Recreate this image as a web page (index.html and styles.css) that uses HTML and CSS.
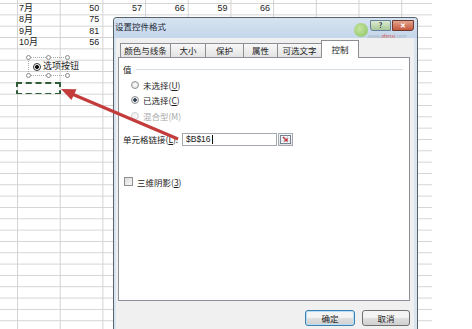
FILE: index.html
```html
<!DOCTYPE html>
<html lang="zh-CN">

<head>
  <meta charset="UTF-8">
  <title>设置控件格式</title>
  <link rel="stylesheet" href="styles.css">
</head>

<body>
  <!-- worksheet -->
  <div class="sheet">
    <div class="row"><span></span><span class="txt">7月</span><span class="num">50</span><span class="num">57</span><span class="num">66</span><span class="num">59</span><span class="num">66</span></div>
    <div class="row"><span></span><span class="txt">8月</span><span class="num">75</span></div>
    <div class="row"><span></span><span class="txt">9月</span><span class="num">81</span></div>
    <div class="row"><span></span><span class="txt">10月</span><span class="num">56</span></div>
    <div class="row"></div>
    <div class="row"></div>
    <div class="row"></div>
    <div class="row"><span></span><span class="marquee"></span></div>
  </div>

  <!-- option button control on the sheet -->
  <div class="optctl">
    <span class="h tl"></span><span class="h tm"></span><span class="h tr"></span>
    <span class="h bl"></span><span class="h bm"></span><span class="h br"></span>
    <span class="ctl-radio"></span><span class="ctl-label">选项按钮</span>
  </div>

  <!-- dialog -->
  <div class="dialog">
    <div class="titlebar">
      <span class="title">设置控件格式</span>
      <div class="capbtns">
        <span class="cap help">?</span>
        <span class="cap close">✕</span>
      </div>
    </div>
    <div class="client">
      <div class="tabs">
        <span class="tab w50">颜色与线条</span>
        <span class="tab w35">大小</span>
        <span class="tab w38">保护</span>
        <span class="tab w34">属性</span>
        <span class="tab w45">可选文字</span>
        <span class="tab active">控制</span>
      </div>
      <div class="panel">
        <div class="group-head">值</div>
        <div class="options">
          <div class="opt"><span class="radio"></span><span>未选择(<u>U</u>)</span></div>
          <div class="opt"><span class="radio on"></span><span>已选择(<u>C</u>)</span></div>
          <div class="opt off"><span class="radio"></span><span>混合型(M)</span></div>
        </div>
        <div class="link">
          <span class="link-label">单元格链接(<u>L</u>):</span>
          <span class="field">$B$16<i class="caret"></i></span>
          <span class="refbtn">
            <svg width="11" height="9" viewBox="0 0 11 9">
              <rect x="0.5" y="0.5" width="10" height="8" fill="#fff" stroke="#6f7f90" />
              <path d="M0.5 3h10M0.5 6h10M4 0.5v8M7.5 0.5v8" stroke="#b8c4d0" stroke-width="0.7" />
              <path d="M3 2l4 4M7 3.2v2.8h-2.8" stroke="#c8303a" stroke-width="1.2" fill="none" />
            </svg>
          </span>
        </div>
        <div class="check"><span class="box"></span><span>三维阴影(<u>3</u>)</span></div>
      </div>
      <div class="actions">
        <button class="btn default">确定</button>
        <button class="btn">取消</button>
      </div>
    </div>
  </div>

  <!-- site watermark -->
  <div class="mark">
    <span class="mark-logo"></span>
    <span class="mark-url">www.<b>afenxi</b>.com</span>
  </div>

  <!-- red pointer arrow -->
  <svg class="arrow" width="472" height="329" viewBox="0 0 472 329">
    <line x1="72" y1="94" x2="178" y2="139" stroke="#c33b3b" stroke-width="3" />
    <polygon points="61,89 76.5,89.2 71.5,100" fill="#c33b3b" />
  </svg>
</body>

</html>
```

FILE: styles.css
```css
body {
  margin: 0;
  width: 472px;
  height: 329px;
  overflow: hidden;
  position: relative;
  background: #fff;
  font-family: "Noto Sans CJK SC", "Liberation Sans", sans-serif;
  color: #1b1b1b;
}

/* worksheet */
.sheet {
  width: 432px;
  height: 329px;
  padding-top: 3px;
  box-sizing: border-box;
  background-image:
    linear-gradient(to right, #d3d3d3 1px, transparent 1px),
    linear-gradient(to bottom, #d3d3d3 1px, transparent 1px);
  background-size: 42.7px 100%, 100% 11.33px;
  background-position: 17px 0, 0 3.07px;
}

.row {
  display: grid;
  grid-template-columns: 17px repeat(6, 42.7px);
  height: 11.33px;
  font-family: "Liberation Sans", "Noto Sans CJK SC", sans-serif;
  font-size: 9px;
  line-height: 11.33px;
  color: #222;
  overflow: hidden;
}

.txt {
  padding-left: 2px;
}

.num {
  text-align: right;
  padding-right: 3px;
}

.marquee {
  outline: 2px dashed #2f5e38;
  outline-offset: -1px;
  margin-top: 1px;
}

.optctl {
  position: absolute;
  left: 28px;
  top: 57px;
  width: 40px;
  height: 19px;
  border: 1px dotted #a8a8a8;
  box-sizing: border-box;
}

.h {
  position: absolute;
  width: 3px;
  height: 3px;
  border: 1px solid #8a8a8a;
  border-radius: 50%;
  background: #fff;
}

.tl { left: -3px; top: -3px; }
.tm { left: 17px; top: -3px; }
.tr { right: -3px; top: -3px; }
.bl { left: -3px; bottom: -3px; }
.bm { left: 17px; bottom: -3px; }
.br { right: -3px; bottom: -3px; }

.ctl-radio {
  position: absolute;
  left: 4px;
  top: 5px;
  width: 6px;
  height: 6px;
  border: 1px solid #333;
  border-radius: 50%;
  background: radial-gradient(#111 0 1.8px, #fff 2.2px);
}

.ctl-label {
  position: absolute;
  left: 14px;
  top: 2px;
  font-size: 9px;
  line-height: 12px;
  white-space: nowrap;
}

/* dialog */
.dialog {
  position: absolute;
  left: 113px;
  top: 17px;
  width: 305px;
  height: 312px;
  box-sizing: border-box;
  border: 1px solid #58626d;
  border-bottom: none;
  border-radius: 4px 4px 0 0;
  background: #d9e4ef;
  display: flex;
  flex-direction: column;
  font-size: 8.5px;
}

.titlebar {
  height: 20px;
  display: flex;
  align-items: flex-start;
  padding-left: 1px;
  background: linear-gradient(#d6e3f1, #c4d6ea);
  border-radius: 3px 3px 0 0;
}

.title {
  line-height: 16px;
  color: #1e2b3a;
}

.capbtns {
  margin-left: auto;
  margin-right: 3px;
  margin-top: 2px;
  display: flex;
  gap: 1px;
}

.cap {
  height: 9px;
  line-height: 9px;
  text-align: center;
  font-size: 7px;
  font-weight: bold;
  border: 1px solid #66809a;
}

.help {
  width: 19px;
  border-radius: 0 0 0 3px;
  background: linear-gradient(#dcead0, #a9c99a);
  color: #234;
}

.close {
  width: 20px;
  border-color: #6e3b32;
  border-radius: 0 0 3px 0;
  background: linear-gradient(#e4a48d, #c4573b);
  color: #fff;
}

.client {
  flex: 1;
  margin: 0 3px 0 2px;
  padding-top: 2px;
  background: #f0f0f0;
  display: flex;
  flex-direction: column;
}

.tabs {
  height: 17px;
  margin-left: 4px;
  display: flex;
  align-items: flex-end;
}

.tab {
  height: 14px;
  box-sizing: border-box;
  border: 1px solid #8c8e94;
  border-bottom: none;
  border-right: none;
  background: linear-gradient(#f8f8f8, #e3e3e3);
  text-align: center;
  line-height: 13px;
}

.w50 { width: 50px; }
.w35 { width: 35px; }
.w38 { width: 38px; }
.w34 { width: 34px; }
.w45 { width: 45px; border-right: 1px solid #8c8e94; }

.tab.active {
  width: 38px;
  height: 18px;
  margin-bottom: -1px;
  margin-left: -1px;
  border-right: 1px solid #8c8e94;
  background: #fff;
  line-height: 16px;
  position: relative;
  z-index: 1;
}

.panel {
  margin: 0 4px 0 2px;
  height: 244px;
  box-sizing: border-box;
  border: 1px solid #8e9099;
  background: #fff;
  padding: 5px 6px 0 4px;
  display: flex;
  flex-direction: column;
}

.group-head {
  display: flex;
  align-items: center;
  gap: 4px;
  height: 12px;
}

.group-head::after {
  content: "";
  flex: 1;
  height: 1px;
  background: #d5dde4;
}

.options {
  margin-top: 2px;
  padding-left: 8px;
}

.opt {
  display: flex;
  align-items: center;
  gap: 4px;
  height: 15.5px;
}

.opt.off {
  color: #a9a9a9;
}

.radio {
  width: 6px;
  height: 6px;
  border: 1px solid #929292;
  border-radius: 50%;
  background: radial-gradient(#fff, #d9d9d9);
}

.radio.on {
  background: radial-gradient(#2e3f52 0 1.5px, #e8e8e8 2px);
}

.opt.off .radio {
  border-color: #cfcfcf;
  background: #f4f4f4;
}

.link {
  margin-top: 8.5px;
  height: 14px;
  display: flex;
  align-items: center;
}

.link-label {
  width: 59px;
}

.field {
  width: 95px;
  height: 13px;
  box-sizing: border-box;
  border: 1px solid #a4a9b1;
  padding-left: 3px;
  line-height: 11px;
  font-family: "Liberation Sans", sans-serif;
  font-size: 8.5px;
  display: flex;
  align-items: center;
}

.caret {
  width: 1px;
  height: 9px;
  background: #111;
  margin-left: 1px;
}

.refbtn {
  width: 15px;
  height: 13px;
  box-sizing: border-box;
  border: 1px solid #a4a9b1;
  background: linear-gradient(#fafafa, #e2e2e2);
  display: flex;
  align-items: center;
  justify-content: center;
  margin-left: 1px;
}

.check {
  margin-top: 29.5px;
  height: 12px;
  display: flex;
  align-items: center;
  gap: 4px;
  padding-left: 1px;
}

.box {
  width: 7px;
  height: 7px;
  border: 1px solid #8e8f8f;
  background: linear-gradient(135deg, #dcdcdc, #f6f6f6);
}

.actions {
  display: flex;
  justify-content: flex-end;
  gap: 7px;
  padding: 9px 4px 0 0;
}

.btn {
  width: 48px;
  height: 16px;
  padding: 0;
  font-family: inherit;
  font-size: 8.5px;
  color: #1b1b1b;
  border: 1px solid #707070;
  border-radius: 3px;
  background: linear-gradient(#f4f4f4 0 45%, #dedede 55%, #d0d0d0);
}

.btn.default {
  width: 50px;
  border-color: #3c7fb1;
  box-shadow: inset 0 0 0 1px #b6def7;
}

/* watermark */
.mark {
  position: absolute;
  left: 354px;
  top: 22px;
  width: 66px;
  height: 18px;
}

.mark-logo {
  position: absolute;
  left: 0;
  top: 1px;
  width: 14px;
  height: 14px;
  border-radius: 50%;
  background: radial-gradient(circle at 40% 40%, #c5e68d, #79bd3f);
  opacity: 0.8;
}

.mark-url {
  position: absolute;
  left: 14px;
  top: 11px;
  font-size: 5px;
  line-height: 6px;
  color: #a7b6c4;
  white-space: nowrap;
}

.mark-url b {
  color: #d0504a;
  font-weight: normal;
}

.arrow {
  position: absolute;
  left: 0;
  top: 0;
  pointer-events: none;
}
```
